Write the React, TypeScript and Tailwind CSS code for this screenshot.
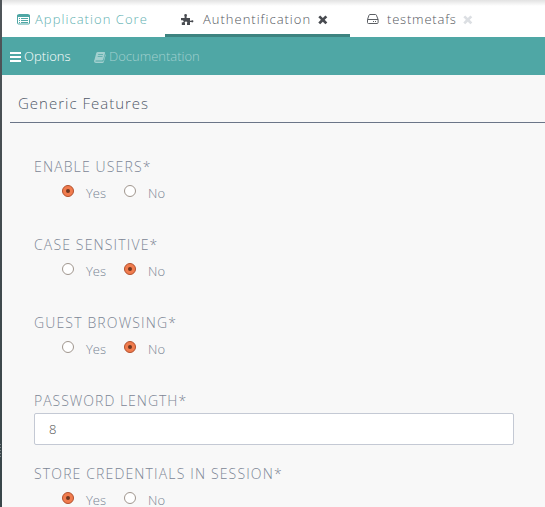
import React from "react";

function ListIcon() {
  return (
    <svg width="14" height="12" viewBox="0 0 14 12" className="shrink-0 text-[#4fa7a5]">
      <rect x="0.5" y="0.5" width="12" height="9.5" rx="1" fill="none" stroke="currentColor" />
      <path fill="currentColor" d="M0 1h13v2H0zM2 4h1v1H2zM2 6h1v1H2zM2 8h1v1H2zM4 4h7v1H4zM4 6h7v1H4zM4 8h7v1H4z" />
    </svg>
  );
}

function PuzzleIcon() {
  return (
    <svg width="13" height="13" viewBox="0 0 13 13" className="shrink-0 text-[#484b50]">
      <path
        fill="currentColor"
        d="M0 5h3.6V3.4C2.9 2.4 3.2 1 4.6 1s1.8 1.400 1 2.400V5H9v2.800h1.300c.7-.8 2.100-.6 2.100.500s-1.400 1.400-2.100.700H9v3H6v-1.600c.6-1 .1-1.800-1-1.800s-1.600.8-1 1.800V12H.800V9.300c1.300.3 1.900-.2 1.900-1S1.500 7 0 7.200z"
      />
    </svg>
  );
}

function CloseIcon() {
  return (
    <svg width="10" height="10" viewBox="0 0 10 10" className="shrink-0">
      <path fill="currentColor" d="M.3 2.3 2.2.4 4.8 2.9 7.4.4l1.9 1.9-2.6 2.5 2.6 2.6-1.9 1.9-2.6-2.6-2.6 2.6L.3 7.4l2.6-2.6z" />
    </svg>
  );
}

function DriveIcon() {
  return (
    <svg width="12" height="11" viewBox="0 0 12 11" className="shrink-0 text-[#5c5f64]">
      <path fill="none" stroke="currentColor" d="M.5 5.5h10.6M.5 5.500v3q0 1 1 1h8.600q1 0 1-1v-3L9.400 1.200Q9.200.5 8.500.5H3q-.7 0-1 .7z" />
      <path fill="currentColor" d="M6 7h1v1H6zM8 7h1v1H8z" />
    </svg>
  );
}

function BarsIcon() {
  return (
    <svg width="11" height="10" viewBox="0 0 11 10" className="shrink-0">
      <path fill="currentColor" d="M0 0h11v2H0zM0 4h11v2H0zM0 8h11v2H0z" />
    </svg>
  );
}

function BookIcon() {
  return (
    <svg width="12" height="11" viewBox="0 0 12 11" className="shrink-0">
      <path
        fill="currentColor"
        fillRule="evenodd"
        d="M3.800 0h6.400q1.100 0 .9 1L9.200 7.500q-.3.900-1.200.9H2q-.8 0-.7.600.2.600.9.600h6.600q.4 0 .6-.4L11.300 2.300q.6.400.4 1L9.900 9.700Q9.500 11 8.400 11H1.900Q.2 11 0 9.300q0-.8.5-1.600L2.200 1.300Q2.600 0 3.800 0zM4.300 2.300 4.100 3h4.800l.2-.7zM3.800 4.200l-.2.700h4.800l.2-.7z"
      />
    </svg>
  );
}

function Radio({ checked }: { checked: boolean }) {
  return checked ? (
    <span className="flex size-3 shrink-0 items-center justify-center rounded-full border border-[#b2512e] bg-[#f17c4e]">
      <span className="size-1 rounded-full bg-[#703720]" />
    </span>
  ) : (
    <span className="size-3 shrink-0 rounded-full border border-[#a0968e] bg-white" />
  );
}

function RadioField({ label, value }: { label: string; value: "Yes" | "No" }) {
  return (
    <div className="h-[78px]">
      <div className="h-[18px] text-[14px] leading-[18px] tracking-[1.15px] text-[#7c8695]">{label}</div>
      <div className="flex pt-[9px] pl-7 text-[13px] leading-4 text-[#788493]">
        <Radio checked={value === "Yes"} />
        <span className="ml-3 w-[38px]">Yes</span>
        <Radio checked={value === "No"} />
        <span className="ml-3">No</span>
      </div>
    </div>
  );
}

export default function App() {
  return (
    <div className="flex h-[507px] w-[545px] overflow-hidden bg-[#f8f8f8] font-['Open_Sans',sans-serif] font-light">
      <div className="flex w-0.5 shrink-0 flex-col bg-linear-to-b from-[#50565a] via-[#414a4e] to-[#39464a] pt-[444px]">
        <div className="h-[14px] w-px bg-[repeating-linear-gradient(#7c8487_0_1px,transparent_1px_3px)]" />
      </div>
      <div className="min-w-0 flex-1">
        <div className="flex h-[37px] bg-linear-to-b from-[#e2e2e2] to-white to-[6px] text-[13px] tracking-[1px]">
          <div className="flex h-[37px] w-[163px] items-center gap-1 pt-[2px] pl-[15px] text-[#5fb0b1]">
            <ListIcon />
            <span className="tracking-[1.05px]">Application Core</span>
          </div>
          <div className="flex h-[37px] w-[185px] items-center border-b-[3px] border-[#3d8380] pt-[5px] pl-4 text-[#54575e]">
            <PuzzleIcon />
            <span className="ml-[9px] w-[115px]">Authentification</span>
            <span className="text-[#484b50]"><CloseIcon /></span>
          </div>
          <div className="flex h-[37px] items-center pt-[2px] pl-[17px] text-[#54575e]">
            <DriveIcon />
            <span className="ml-2 w-[76px] tracking-[0.8px]">testmetafs</span>
            <span className="text-[#dcdfe3]"><CloseIcon /></span>
          </div>
        </div>
        <div className="flex h-[38px] items-center bg-[#4fa7a5] pt-[2px] pl-2 text-[13px] text-white">
          <BarsIcon />
          <span className="ml-[3px] w-[70px] tracking-[0.05px]">Options</span>
          <span className="flex items-center gap-[3px] text-[#a2d0cf]">
            <BookIcon />
            Documentation
          </span>
        </div>
        <h2 className="ml-2 h-12 border-b border-[#6b7588] pt-[18px] pl-2 text-[15px] leading-5 font-light tracking-[1px] text-[#505869]">
          Generic Features
        </h2>
        <div className="pt-[35px] pl-8">
          <RadioField label="ENABLE USERS*" value="Yes" />
          <RadioField label="CASE SENSITIVE*" value="No" />
          <RadioField label="GUEST BROWSING*" value="No" />
          <div className="h-[73px]">
            <div className="h-[21px] text-[14px] leading-[18px] tracking-[1px] text-[#7c8695]">PASSWORD LENGTH*</div>
            <div className="h-8 w-[480px] rounded-xs border border-[#c4c9d4] bg-white pl-[14px] text-[13px] leading-[30px] text-[#555]">8</div>
          </div>
          <RadioField label="STORE CREDENTIALS IN SESSION*" value="Yes" />
        </div>
      </div>
    </div>
  );
}
